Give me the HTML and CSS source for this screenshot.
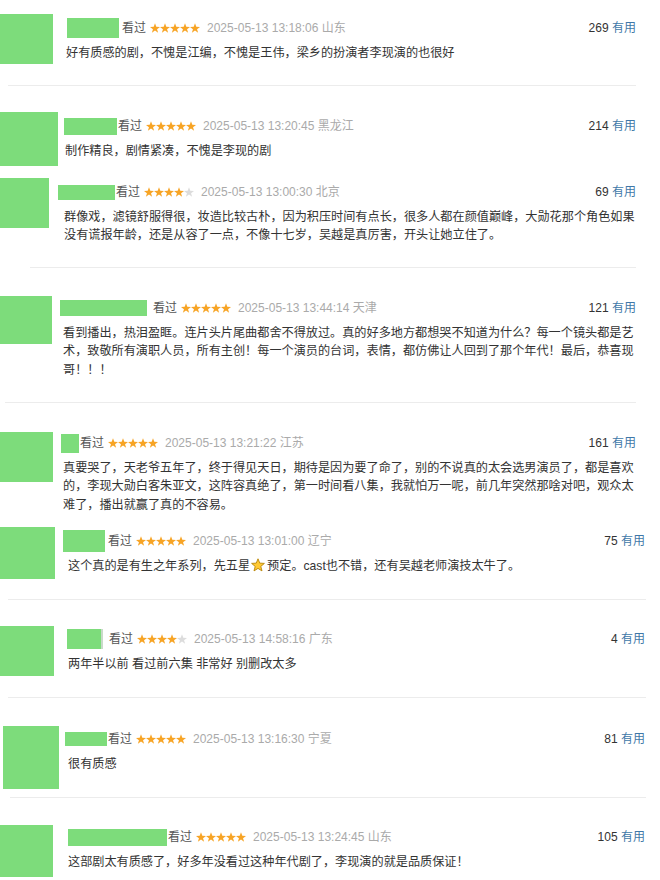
FILE: index.html
```html
<!DOCTYPE html>
<html lang="zh-CN">
<head>
<meta charset="utf-8">
<title>短评</title>
<link rel="stylesheet" href="styles.css">
</head>
<body>
<svg class="defs" width="0" height="0" aria-hidden="true">
  <defs>
    <symbol id="star" viewBox="0 0 10 10">
      <polygon points="5,0.3 6.3,3.85 10,3.9 7.05,6.2 8.1,9.7 5,7.6 1.9,9.7 2.95,6.2 0,3.9 3.7,3.85"/>
    </symbol>
  </defs>
</svg>

<div class="list">

  <div class="c c1">
    <div class="av"></div>
    <div class="bd">
      <div class="meta"><span class="nm"></span><span class="st">看过</span>
        <svg class="stars" viewBox="0 0 50 10"><use href="#star" x="0" width="10" height="10" class="on"/><use href="#star" x="10" width="10" height="10" class="on"/><use href="#star" x="20" width="10" height="10" class="on"/><use href="#star" x="30" width="10" height="10" class="on"/><use href="#star" x="40" width="10" height="10" class="on"/></svg>
        <span class="time">2025-05-13 13:18:06 山东</span><span class="votes"><span class="n">269</span> <span class="u">有用</span></span></div>
      <p class="txt">好有质感的剧，不愧是江编，不愧是王伟，梁乡的扮演者李现演的也很好</p>
    </div>
  </div>
  <div class="sep sep1"></div>

  <div class="c c2">
    <div class="av"></div>
    <div class="bd">
      <div class="meta"><span class="nm"></span><span class="st">看过</span>
        <svg class="stars" viewBox="0 0 50 10"><use href="#star" x="0" width="10" height="10" class="on"/><use href="#star" x="10" width="10" height="10" class="on"/><use href="#star" x="20" width="10" height="10" class="on"/><use href="#star" x="30" width="10" height="10" class="on"/><use href="#star" x="40" width="10" height="10" class="on"/></svg>
        <span class="time">2025-05-13 13:20:45 黑龙江</span><span class="votes"><span class="n">214</span> <span class="u">有用</span></span></div>
      <p class="txt">制作精良，剧情紧凑，不愧是李现的剧</p>
    </div>
  </div>

  <div class="c c3">
    <div class="av"></div>
    <div class="bd">
      <div class="meta"><span class="nm"></span><span class="st">看过</span>
        <svg class="stars" viewBox="0 0 50 10"><use href="#star" x="0" width="10" height="10" class="on"/><use href="#star" x="10" width="10" height="10" class="on"/><use href="#star" x="20" width="10" height="10" class="on"/><use href="#star" x="30" width="10" height="10" class="on"/><use href="#star" x="40" width="10" height="10" class="off"/></svg>
        <span class="time">2025-05-13 13:00:30 北京</span><span class="votes"><span class="n">69</span> <span class="u">有用</span></span></div>
      <p class="txt">群像戏，滤镜舒服得很，妆造比较古朴，因为积压时间有点长，很多人都在颜值巅峰，大勋花那个角色如果没有谎报年龄，还是从容了一点，不像十七岁，吴越是真厉害，开头让她立住了。</p>
    </div>
  </div>
  <div class="sep sep2"></div>

  <div class="c c4">
    <div class="av"></div>
    <div class="bd">
      <div class="meta"><span class="nm"></span><span class="st">看过</span>
        <svg class="stars" viewBox="0 0 50 10"><use href="#star" x="0" width="10" height="10" class="on"/><use href="#star" x="10" width="10" height="10" class="on"/><use href="#star" x="20" width="10" height="10" class="on"/><use href="#star" x="30" width="10" height="10" class="on"/><use href="#star" x="40" width="10" height="10" class="on"/></svg>
        <span class="time">2025-05-13 13:44:14 天津</span><span class="votes"><span class="n">121</span> <span class="u">有用</span></span></div>
      <p class="txt">看到播出，热泪盈眶。连片头片尾曲都舍不得放过。真的好多地方都想哭不知道为什么？每一个镜头都是艺术，致敬所有演职人员，所有主创！每一个演员的台词，表情，都仿佛让人回到了那个年代！最后，恭喜现哥！！！</p>
    </div>
  </div>
  <div class="sep sep3"></div>

  <div class="c c5">
    <div class="av"></div>
    <div class="bd">
      <div class="meta"><span class="nm"></span><span class="st">看过</span>
        <svg class="stars" viewBox="0 0 50 10"><use href="#star" x="0" width="10" height="10" class="on"/><use href="#star" x="10" width="10" height="10" class="on"/><use href="#star" x="20" width="10" height="10" class="on"/><use href="#star" x="30" width="10" height="10" class="on"/><use href="#star" x="40" width="10" height="10" class="on"/></svg>
        <span class="time">2025-05-13 13:21:22 江苏</span><span class="votes"><span class="n">161</span> <span class="u">有用</span></span></div>
      <p class="txt">真要哭了，天老爷五年了，终于得见天日，期待是因为要了命了，别的不说真的太会选男演员了，都是喜欢的，李现大勋白客朱亚文，这阵容真绝了，第一时间看八集，我就怕万一呢，前几年突然那啥对吧，观众太难了，播出就赢了真的不容易。</p>
    </div>
  </div>

  <div class="c c6">
    <div class="av"></div>
    <div class="bd">
      <div class="meta"><span class="nm"></span><span class="st">看过</span>
        <svg class="stars" viewBox="0 0 50 10"><use href="#star" x="0" width="10" height="10" class="on"/><use href="#star" x="10" width="10" height="10" class="on"/><use href="#star" x="20" width="10" height="10" class="on"/><use href="#star" x="30" width="10" height="10" class="on"/><use href="#star" x="40" width="10" height="10" class="on"/></svg>
        <span class="time">2025-05-13 13:01:00 辽宁</span><span class="votes"><span class="n">75</span> <span class="u">有用</span></span></div>
      <p class="txt">这个真的是有生之年系列，先五星<svg class="emoji" viewBox="0 0 14 14"><polygon points="7,0.8 8.75,5.1 13.4,5.4 9.8,8.4 11,12.9 7,10.4 3,12.9 4.2,8.4 0.6,5.4 5.25,5.1"/></svg>预定。cast也不错，还有吴越老师演技太牛了。</p>
    </div>
  </div>
  <div class="sep sep4"></div>

  <div class="c c7">
    <div class="av"></div>
    <div class="bd">
      <div class="meta"><span class="nm"></span><span class="st">看过</span>
        <svg class="stars" viewBox="0 0 50 10"><use href="#star" x="0" width="10" height="10" class="on"/><use href="#star" x="10" width="10" height="10" class="on"/><use href="#star" x="20" width="10" height="10" class="on"/><use href="#star" x="30" width="10" height="10" class="on"/><use href="#star" x="40" width="10" height="10" class="off"/></svg>
        <span class="time">2025-05-13 14:58:16 广东</span><span class="votes"><span class="n">4</span> <span class="u">有用</span></span></div>
      <p class="txt">两年半以前 看过前六集 非常好 别删改太多</p>
    </div>
  </div>
  <div class="sep sep5"></div>

  <div class="c c8">
    <div class="av"></div>
    <div class="bd">
      <div class="meta"><span class="nm"></span><span class="st">看过</span>
        <svg class="stars" viewBox="0 0 50 10"><use href="#star" x="0" width="10" height="10" class="on"/><use href="#star" x="10" width="10" height="10" class="on"/><use href="#star" x="20" width="10" height="10" class="on"/><use href="#star" x="30" width="10" height="10" class="on"/><use href="#star" x="40" width="10" height="10" class="on"/></svg>
        <span class="time">2025-05-13 13:16:30 宁夏</span><span class="votes"><span class="n">81</span> <span class="u">有用</span></span></div>
      <p class="txt">很有质感</p>
    </div>
  </div>
  <div class="sep sep6"></div>

  <div class="c c9">
    <div class="av"></div>
    <div class="bd">
      <div class="meta"><span class="nm"></span><span class="st">看过</span>
        <svg class="stars" viewBox="0 0 50 10"><use href="#star" x="0" width="10" height="10" class="on"/><use href="#star" x="10" width="10" height="10" class="on"/><use href="#star" x="20" width="10" height="10" class="on"/><use href="#star" x="30" width="10" height="10" class="on"/><use href="#star" x="40" width="10" height="10" class="on"/></svg>
        <span class="time">2025-05-13 13:24:45 山东</span><span class="votes"><span class="n">105</span> <span class="u">有用</span></span></div>
      <p class="txt">这部剧太有质感了，好多年没看过这种年代剧了，李现演的就是品质保证！</p>
    </div>
  </div>

</div>
</body>
</html>
```

FILE: styles.css
```css
html, body {
  margin: 0;
  padding: 0;
  background: #ffffff;
}

body {
  width: 660px;
  height: 880px;
  overflow: hidden;
  font-family: "Liberation Sans", "Noto Sans CJK SC", sans-serif;
  color: #333333;
}

.defs {
  position: absolute;
  width: 0;
  height: 0;
  overflow: hidden;
}

.list {
  display: flex;
  flex-direction: column;
}

/* ---------- comment item ---------- */
.c {
  display: flex;
  align-items: flex-start;
  flex: none;
}

.av {
  flex: none;
  background: #7ddc7b;
}

.bd {
  flex: 1;
  min-width: 0;
}

.meta {
  display: flex;
  align-items: center;
  height: 20px;
  font-size: 12px;
  line-height: 20px;
  white-space: nowrap;
}

.nm {
  flex: none;
  box-sizing: border-box;
  background: #7ddc7b;
}

.st {
  color: #555555;
}

.stars {
  flex: none;
  width: 50px;
  height: 10px;
  margin-left: 4px;
}

.stars .on {
  fill: #f7a425;
}

.stars .off {
  fill: #dcdcdc;
}

.time {
  margin-left: 7px;
  color: #aaaaaa;
}

.votes {
  margin-left: auto;
}

.votes .n {
  color: #333333;
}

.votes .u {
  color: #3f78a8;
}

.txt {
  margin: 6px 0 0;
  font-size: 12.15px;
  line-height: 18.3px;
  color: #333333;
}

.emoji {
  width: 14px;
  height: 14px;
  vertical-align: -2px;
  margin: 0 2px 0 1px;
}

.emoji polygon {
  fill: #ffc933;
  stroke: #b8860b;
  stroke-width: 0.9;
  stroke-linejoin: round;
}

/* ---------- separators ---------- */
.sep {
  flex: none;
  height: 1px;
  background: #ececec;
}

.sep1 { margin: 0 24px 0 8px; }
.sep2 { margin: 0 24px 0 30px; }
.sep3 { margin: 0 24px 0 5px; }
.sep4 { margin: 0 14px 0 8px; }
.sep5 { margin: 0 14px 0 8px; }
.sep6 { margin: 0 14px 0 10px; }

/* ---------- per item geometry ---------- */
.c1 { margin-top: 14px; height: 71px; }
.c1 .av { width: 53px; height: 50px; }
.c1 .bd { margin: 4px 24px 0 13px; }
.c1 .meta { padding-left: 1px; }
.c1 .nm { width: 52px; height: 20px; margin-right: 3px; }

.c2 { margin-top: 26px; height: 66px; }
.c2 .av { width: 58px; height: 54px; }
.c2 .bd { margin: 4px 24px 0 6px; }
.c2 .txt { padding-left: 1px; }
.c2 .nm { width: 53px; height: 17px; margin-right: 1px; }

.c3 { height: 89px; }
.c3 .av { width: 49px; height: 50px; }
.c3 .bd { margin: 4px 24px 0 9px; }
.c3 .txt { padding-left: 6px; margin-right: -2px; }
.c3 .nm { width: 57px; height: 15px; margin-right: 1px; }

.c4 { margin-top: 28px; height: 106px; }
.c4 .av { width: 52px; height: 48px; }
.c4 .bd { margin: 2px 24px 0 8px; }
.c4 .txt { padding-left: 3px; }
.c4 .nm { width: 87px; height: 16px; margin-right: 6px; }

.c5 { margin-top: 29px; height: 95px; }
.c5 .av { width: 53px; height: 50px; }
.c5 .bd { margin: 1px 24px 0 8px; }
.c5 .txt { padding-left: 2px; }
.c5 .nm { width: 18px; height: 19px; margin-right: 1px; }

.c6 { height: 72px; }
.c6 .av { width: 55px; height: 52px; }
.c6 .bd { margin: 4px 15px 0 8px; }
.c6 .txt { padding-left: 5px; }
.c6 .nm { width: 42px; height: 22px; margin-right: 3px; }

.c7 { margin-top: 26px; height: 71px; }
.c7 .av { width: 54px; height: 50px; }
.c7 .bd { margin: 3px 15px 0 13px; }
.c7 .txt { padding-left: 1px; }
.c7 .nm { width: 36px; height: 20px; margin-right: 6px; border-right: 2px solid #c9d9c9; }

.c8 { margin-top: 28px; height: 71px; }
.c8 .av { width: 56px; height: 63px; margin-left: 3px; }
.c8 .bd { margin: 3px 15px 0 6px; }
.c8 .txt { padding-left: 3px; }
.c8 .nm { width: 42px; height: 14px; margin-right: 1px; }

.c9 { margin-top: 27px; height: 55px; }
.c9 .av { width: 53px; height: 52px; }
.c9 .bd { margin: 2px 15px 0 15px; }
.c9 .nm { width: 99px; height: 17px; margin-right: 1px; }
```
